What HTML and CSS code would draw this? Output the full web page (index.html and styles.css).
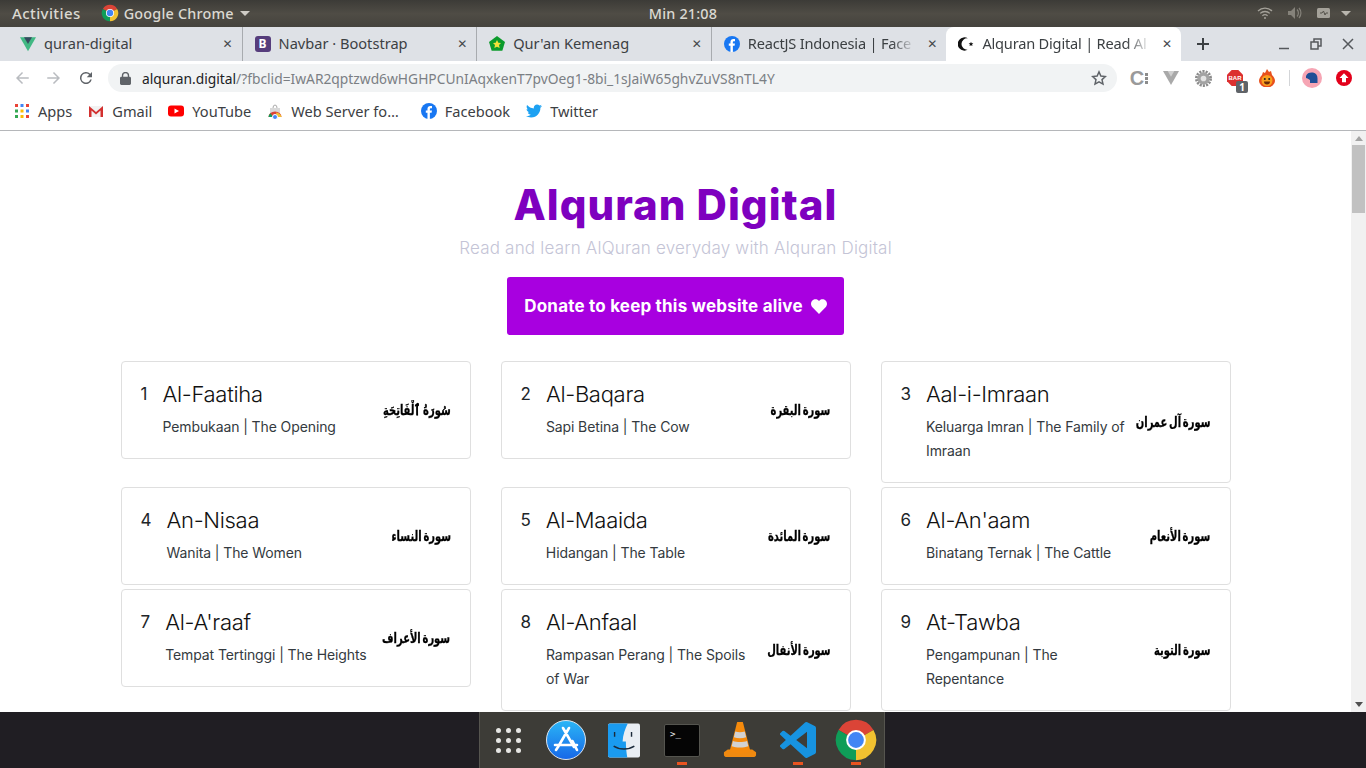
FILE: index.html
```html
<!DOCTYPE html>
<html>

	<head>
		<meta charset="UTF-8">
		<title>Alquran Digital | Read AlQuran</title>
		<link rel="stylesheet" href="styles.css">
	</head>

	<body>
		<svg class="defs" width="0" height="0">
			<symbol id="chrome" viewBox="0 0 24 24">
				<path d="M12 12L2.47 6.5A11 11 0 0 1 21.53 6.5Z" fill="#db4437"/>
				<path d="M12 12L21.53 6.5A11 11 0 0 1 12 23Z" fill="#f2c230"/>
				<path d="M12 12L12 23A11 11 0 0 1 2.47 6.5Z" fill="#0f9d58"/>
				<circle cx="12" cy="12" r="5.4" fill="#fff"/>
				<circle cx="12" cy="12" r="4.3" fill="#4285f4"/>
			</symbol>
			<symbol id="fb" viewBox="0 0 24 24">
				<circle cx="12" cy="12" r="12" fill="#1877f2"/>
				<path d="M16.5 7.8h-2c-.8 0-1.2.5-1.2 1.2v2.4h3.1l-.5 3.2h-2.6V24h-3.6v-9.4H7.2v-3.2h2.5V8.8c0-2.9 1.7-4.4 4.2-4.4 1.2 0 2.6.2 2.6.2z" fill="#fff"/>
			</symbol>
		</svg>

		<!-- gnome top bar -->
		<div class="topbar">
			<div class="top_left">
				<span class="activities">Activities</span>
				<svg class="top_chrome" width="18" height="18"><use href="#chrome"/></svg>
				<span class="app_name">Google Chrome</span>
				<i class="caret"></i>
			</div>
			<div class="clock">Min 21:08</div>
			<div class="tray">
				<svg width="16" height="14" viewBox="0 0 16 14" fill="none" stroke="#a5a29a" stroke-width="1.3"><path d="M1 5a10 10 0 0 1 14 0M3.2 7.4a7 7 0 0 1 9.6 0M5.4 9.7a4 4 0 0 1 5.2 0"/><circle cx="8" cy="12" r="1" fill="#a5a29a" stroke="none"/></svg>
				<svg width="14" height="14" viewBox="0 0 14 14" fill="#85827a"><path d="M0 5h3l4-4v12L3 9H0z"/><path d="M9 3.5a5 5 0 0 1 0 7M11 2a7.500 7.500 0 0 1 0 10" fill="none" stroke="#85827a" stroke-width="1.2"/></svg>
				<svg width="14" height="12" viewBox="0 0 14 12"><rect x="0" y="1" width="13" height="10" rx="1.5" fill="#a5a29a"/><path d="M3 6h2l1.500-2 1.500 4 1-2h2" fill="none" stroke="#55524b"/></svg>
				<i class="caret tray_caret"></i>
			</div>
		</div>

		<!-- tabs -->
		<div class="tabstrip">
			<div class="tab">
				<svg class="favicon" viewBox="0 0 24 24"><path d="M0 2h24L12 23z" fill="#41b883"/><path d="M6 2h12l-6 10z" fill="#35495e"/></svg>
				<span class="tab_title">quran-digital</span>
				<span class="tab_close">✕</span>
			</div>
			<div class="tab">
				<span class="favicon boot">B</span>
				<span class="tab_title">Navbar · Bootstrap</span>
				<span class="tab_close">✕</span>
			</div>
			<div class="tab">
				<svg class="favicon" viewBox="0 0 24 24"><path d="M12 0l12 9-4 13H4L0 9z" fill="#0c9b2c"/><path d="M12 6l2 4 4 .5-3 3 1 4.500-4-2-4 2 1-4.500-3-3 4-.5z" fill="#f3e23a"/></svg>
				<span class="tab_title">Qur'an Kemenag</span>
				<span class="tab_close">✕</span>
			</div>
			<div class="tab tab_last">
				<svg class="favicon"><use href="#fb"/></svg>
				<span class="tab_title fade">ReactJS Indonesia | Face</span>
				<span class="tab_close">✕</span>
			</div>
			<div class="tab tab_active">
				<svg class="favicon" viewBox="0 0 24 24"><path d="M15 3.600A10 10 0 1 0 15 20.400 8.500 8.500 0 1 1 15 3.600z" fill="#111"/><path d="M19.500 8.500l1 2.300 2.500.2-1.900 1.600.6 2.400-2.200-1.300-2.200 1.300.6-2.400-1.900-1.600 2.500-.2z" fill="#111"/></svg>
				<span class="tab_title fade">Alquran Digital | Read Al</span>
				<span class="tab_close">✕</span>
			</div>
			<span class="newtab">
				<svg width="14" height="14" viewBox="0 0 14 14"><path d="M7 1v12M1 7h12" stroke="#3c4043" stroke-width="2"/></svg>
			</span>
			<div class="win_btns">
				<svg width="12" height="12" viewBox="0 0 12 12"><path d="M1 10.500h10" stroke="#55585c" stroke-width="1.500"/></svg>
				<svg width="12" height="12" viewBox="0 0 12 12" fill="none" stroke="#55585c" stroke-width="1.500"><path d="M1 4h7v7H1zM4 4V1h7v7H8"/></svg>
				<svg width="12" height="12" viewBox="0 0 12 12"><path d="M1 1l10 10M11 1L1 11" stroke="#55585c" stroke-width="1.500"/></svg>
			</div>
		</div>

		<!-- address bar -->
		<div class="toolbar">
			<span class="tool"><svg width="18" height="18" viewBox="0 0 24 24" fill="#b9bcc0"><path d="M21 11H7.800l5.600-5.600L12 4l-8 8 8 8 1.400-1.400L7.800 13H21z"/></svg></span>
			<span class="tool"><svg width="18" height="18" viewBox="0 0 24 24" fill="#b9bcc0"><path d="M3 11h13.200l-5.600-5.600L12 4l8 8-8 8-1.400-1.400 5.600-5.600H3z"/></svg></span>
			<span class="tool"><svg width="18" height="18" viewBox="0 0 24 24" fill="#5f6368"><path d="M17.650 6.350A8 8 0 1 0 19.730 14h-2.080A6 6 0 1 1 12 6c1.660 0 3.140.69 4.220 1.780L13 11h7V4z"/></svg></span>
			<div class="omnibox">
				<svg class="lock" width="11" height="13" viewBox="0 0 12 14" fill="#5f6368"><path d="M2 5V3.800a4 4 0 0 1 8 0V5h.5c.8 0 1.500.7 1.500 1.500v6c0 .8-.7 1.500-1.500 1.500h-9C.7 14 0 13.300 0 12.500v-6C0 5.700.7 5 1.500 5zm1.500 0h5V3.800a2.500 2.500 0 0 0-5 0z"/></svg>
				<span class="url"><b>alquran.digital</b>/?fbclid=IwAR2qptzwd6wHGHPCUnIAqxkenT7pvOeg1-8bi_1sJaiW65ghvZuVS8nTL4Y</span>
				<svg class="star" width="16" height="16" viewBox="0 0 24 24" fill="none" stroke="#5f6368" stroke-width="2.200"><path d="M12 2.800l2.800 6.300 6.800.7-5.100 4.600 1.500 6.800-6-3.500-6 3.500 1.500-6.800L2.400 9.800l6.800-.7z"/></svg>
			</div>
			<span class="tool ext_c">C<i></i></span>
			<span class="tool"><svg width="16" height="14" viewBox="0 0 24 21"><path d="M0 0h24L12 21z" fill="#a9a9a9"/><path d="M7 0h10l-5 8.500z" fill="#d0d0d0"/></svg></span>
			<span class="tool"><svg width="17" height="17" viewBox="0 0 18 18"><circle cx="9" cy="9" r="7.500" fill="none" stroke="#8b8b8b" stroke-width="3" stroke-dasharray="2.200 1.200"/><circle cx="9" cy="9" r="6.500" fill="#a3a3a3"/><circle cx="9" cy="9" r="3" fill="#e4e4e4"/></svg></span>
			<span class="tool ext_badge">
				<svg width="16" height="16" viewBox="0 0 16 16"><path d="M4.700 0h6.600L16 4.700v6.600L11.300 16H4.700L0 11.300V4.700z" fill="#dc2f2f"/></svg>
				<span class="bar_txt">BAR</span>
				<span class="badge">1</span>
			</span>
			<span class="tool"><svg width="16" height="18" viewBox="0 0 16 18"><path d="M8 0l2 3 2-1 1 4c2 2 3 4 3 6a8 6.500 0 0 1-16 0c0-2 1-4 3-6l1-3 2 1z" fill="#e8501c"/><circle cx="8" cy="11.500" r="5.500" fill="#f9a01f"/><circle cx="5.800" cy="10" r="1" fill="#222"/><circle cx="10.200" cy="10" r="1" fill="#222"/><path d="M5 12.500a3 3 0 0 0 6 0z" fill="#6b2a08"/></svg></span>
			<i class="tool_div"></i>
			<span class="tool"><svg width="20" height="20" viewBox="0 0 20 20"><circle cx="10" cy="10" r="10" fill="#f6a5b4"/><path d="M4 8c1-3 4-4 7-3.500 3 .5 4.500 3 4.500 6V15H8v-3L5.500 10.500 4 10z" fill="#1f4e96"/></svg></span>
			<span class="tool"><svg width="16" height="16" viewBox="0 0 16 16"><circle cx="8" cy="8" r="8" fill="#e3001b"/><path d="M8 3.200L12.500 8H10v4.200H6V8H3.500z" fill="#fff"/></svg></span>
		</div>

		<!-- bookmarks -->
		<div class="bookmarks">
			<a class="bm">
				<svg class="bm_icon" viewBox="0 0 16 16"><g id="dots"><rect x="1" y="1" width="3" height="3" fill="#ea4335"/><rect x="6.500" y="1" width="3" height="3" fill="#4285f4"/><rect x="12" y="1" width="3" height="3" fill="#ea4335"/><rect x="1" y="6.500" width="3" height="3" fill="#34a853"/><rect x="6.500" y="6.500" width="3" height="3" fill="#fbbc05"/><rect x="12" y="6.500" width="3" height="3" fill="#4285f4"/><rect x="1" y="12" width="3" height="3" fill="#34a853"/><rect x="6.500" y="12" width="3" height="3" fill="#fbbc05"/><rect x="12" y="12" width="3" height="3" fill="#ea4335"/></g></svg>
				Apps
			</a>
			<a class="bm">
				<svg class="bm_icon" viewBox="0 0 16 16"><path d="M1 3h14v11H1z" fill="#f2f2f2"/><path d="M1 3l7 6 7-6v11h-2.500V7.500L8 11.500 3.500 7.500V14H1z" fill="#d3302f"/></svg>
				Gmail
			</a>
			<a class="bm">
				<svg class="bm_icon" viewBox="0 0 16 16"><rect y="2.500" width="16" height="11" rx="3" fill="#f00"/><path d="M6.500 5.500L11 8l-4.500 2.500z" fill="#fff"/></svg>
				YouTube
			</a>
			<a class="bm bm_web">
				<svg class="bm_icon" viewBox="0 0 16 16"><path d="M3 5h10v5H3z" fill="#d9d9d9"/><path d="M6 5a2 3 0 0 1 4 0" fill="none" stroke="#aaa"/><path d="M1.500 14a6.500 5.500 0 0 1 13 0z" fill="#db4437"/><path d="M9 9.500a6.500 5.500 0 0 1 5.500 4.500H10z" fill="#f2c230"/><path d="M1.500 14a6.500 5.500 0 0 1 2-3.700L6 14z" fill="#0f9d58"/><circle cx="8" cy="14" r="2.500" fill="#4285f4" stroke="#fff"/></svg>
				Web Server fo…
			</a>
			<a class="bm">
				<svg class="bm_icon"><use href="#fb"/></svg>
				Facebook
			</a>
			<a class="bm">
				<svg class="bm_icon" viewBox="0 0 24 24"><path d="M23.954 4.569c-.885.389-1.830.654-2.825.775 1.014-.611 1.794-1.574 2.163-2.723-.951.555-2.005.959-3.127 1.184-.896-.959-2.173-1.559-3.591-1.559-2.717 0-4.920 2.203-4.920 4.917 0 .39.045.765.127 1.124C7.691 8.094 4.066 6.130 1.640 3.161c-.427.722-.666 1.561-.666 2.475 0 1.710.87 3.213 2.188 4.096-.807-.026-1.566-.248-2.228-.616v.061c0 2.385 1.693 4.374 3.946 4.827-.413.111-.849.171-1.296.171-.314 0-.615-.03-.916-.086.631 1.953 2.445 3.377 4.604 3.417-1.680 1.319-3.809 2.105-6.102 2.105-.39 0-.779-.023-1.170-.067 2.189 1.394 4.768 2.209 7.557 2.209 9.054 0 13.999-7.496 13.999-13.986 0-.209 0-.42-.015-.63.961-.689 1.800-1.560 2.460-2.548l-.047-.02z" fill="#1da1f2"/></svg>
				Twitter
			</a>
		</div>

		<!-- page -->
		<div class="viewport">
			<div class="page">
				<h1 class="title">Alquran Digital</h1>
				<p class="subtitle">Read and learn AlQuran everyday with Alquran Digital</p>
				<a class="donate">Donate to keep this website alive
					<svg width="16" height="15" viewBox="0 0 16 15"><path d="M8 15L1.400 8.300C-.5 6.300-.4 3.200 1.400 1.500 3.100-.2 6-.1 7.500 1.500l.5.600.5-.6C10-.1 12.900-.2 14.600 1.500c1.800 1.700 1.900 4.800 0 6.800z" fill="#fff"/></svg>
				</a>
				<div class="cards">
					<div class="card">
						<div class="card_left"><span class="num">1</span><div><div class="name">Al-Faatiha</div><div class="mean">Pembukaan | The Opening</div></div></div>
						<div class="arabic" lang="ar" dir="rtl">سُورَةُ ٱلْفَاتِحَةِ</div>
					</div>
					<div class="card">
						<div class="card_left"><span class="num">2</span><div><div class="name">Al-Baqara</div><div class="mean">Sapi Betina | The Cow</div></div></div>
						<div class="arabic" lang="ar" dir="rtl">سورة البقرة</div>
					</div>
					<div class="card">
						<div class="card_left"><span class="num">3</span><div><div class="name">Aal-i-Imraan</div><div class="mean">Keluarga Imran | The Family of Imraan</div></div></div>
						<div class="arabic" lang="ar" dir="rtl">سورة آل عمران</div>
					</div>
					<div class="card">
						<div class="card_left"><span class="num">4</span><div><div class="name">An-Nisaa</div><div class="mean">Wanita | The Women</div></div></div>
						<div class="arabic" lang="ar" dir="rtl">سورة النساء</div>
					</div>
					<div class="card">
						<div class="card_left"><span class="num">5</span><div><div class="name">Al-Maaida</div><div class="mean">Hidangan | The Table</div></div></div>
						<div class="arabic" lang="ar" dir="rtl">سورة المائدة</div>
					</div>
					<div class="card">
						<div class="card_left"><span class="num">6</span><div><div class="name">Al-An'aam</div><div class="mean">Binatang Ternak | The Cattle</div></div></div>
						<div class="arabic" lang="ar" dir="rtl">سورة الأنعام</div>
					</div>
					<div class="card">
						<div class="card_left"><span class="num">7</span><div><div class="name">Al-A'raaf</div><div class="mean">Tempat Tertinggi | The Heights</div></div></div>
						<div class="arabic" lang="ar" dir="rtl">سورة الأعراف</div>
					</div>
					<div class="card">
						<div class="card_left"><span class="num">8</span><div><div class="name">Al-Anfaal</div><div class="mean">Rampasan Perang | The Spoils of War</div></div></div>
						<div class="arabic" lang="ar" dir="rtl">سورة الأنفال</div>
					</div>
					<div class="card">
						<div class="card_left"><span class="num">9</span><div><div class="name">At-Tawba</div><div class="mean">Pengampunan | The Repentance</div></div></div>
						<div class="arabic" lang="ar" dir="rtl">سورة التوبة</div>
					</div>
				</div>
			</div>
			<div class="scrollbar">
				<i class="arrow_up"></i>
				<div class="thumb"></div>
				<i class="arrow_down"></i>
			</div>
		</div>

		<!-- dock -->
		<div class="dock">
			<div class="dock_inner">
				<span class="dock_item grid_dots"><i></i><i></i><i></i><i></i><i></i><i></i><i></i><i></i><i></i></span>
				<span class="dock_item">
					<svg width="40" height="40" viewBox="0 0 40 40"><defs><linearGradient id="as" x1="0" y1="0" x2="0" y2="1"><stop offset="0" stop-color="#2bb6f6"/><stop offset="1" stop-color="#1667e8"/></linearGradient></defs><circle cx="20" cy="20" r="19.500" fill="url(#as)" stroke="#dfe6ee" stroke-width="1"/><path d="M23 8L12 27M17 8l11 19M9 25h22M26.500 21L31 30M12 27l-2 3" fill="none" stroke="#fff" stroke-width="2.600" stroke-linecap="round"/></svg>
				</span>
				<span class="dock_item">
					<svg width="32" height="35" viewBox="0 0 34 36"><rect width="34" height="36" rx="2" fill="#e9eef3"/><path d="M2 0h19c-3 6-5 12-5.500 19H19c0 6 .5 11 1.500 17H2a2 2 0 0 1-2-2V2a2 2 0 0 1 2-2z" fill="#1a9bf0"/><path d="M7 9v5M25 9v5" stroke="#1b2a3a" stroke-width="1.500"/><path d="M6 24c6 4 16 4 22 0" fill="none" stroke="#1b2a3a" stroke-width="1.500"/></svg>
				</span>
				<span class="dock_item term"><span>&gt;_</span></span>
				<span class="dock_item">
					<svg width="34" height="36" viewBox="0 0 36 38"><path d="M1 32l4-3h26l4 3v3c0 1-1 2-2 2H3c-1 0-2-1-2-2z" fill="#f08a10"/><path d="M15 0h6l8 31c-5 3-17 3-22 0z" fill="#f58a0c"/><path d="M13 10c3 1 7 1 10 0l1.500 6c-4 1.500-9 1.500-13 0zM10.500 20c4 1.500 11 1.500 15 0l1.300 5.500c-5 2-12.600 2-17.600 0z" fill="#d2d2d2"/></svg>
				</span>
				<span class="dock_item">
					<svg width="36" height="36" viewBox="0 0 24 24"><path d="M23.150 2.587L18.210.21a1.494 1.494 0 0 0-1.705.29l-9.460 8.630-4.120-3.128a.999.999 0 0 0-1.276.057L.327 7.261A1 1 0 0 0 .326 8.740L3.899 12 .326 15.260a1 1 0 0 0 .001 1.479L1.650 17.940a.999.999 0 0 0 1.276.057l4.120-3.128 9.460 8.630a1.492 1.492 0 0 0 1.704.29l4.942-2.377A1.500 1.500 0 0 0 24 20.060V3.939a1.500 1.500 0 0 0-.85-1.352zm-5.146 14.861L10.826 12l7.178-5.448v10.896z" fill="#1793e0"/></svg>
				</span>
				<span class="dock_item">
					<svg width="44" height="44"><use href="#chrome"/></svg>
				</span>
			</div>
			<i class="run run1"></i><i class="run run2"></i><i class="run run3"></i>
		</div>
	</body>

</html>
```

FILE: styles.css
```css
* {
	margin: 0px;
	padding: 0px;
	box-sizing: border-box;
}
html, body {
	width: 1366px;
	height: 768px;
	overflow: hidden;
}
body {
	display: flex;
	flex-direction: column;
	font-family: "Noto Sans", sans-serif;
	background: #fff;
}
i {
	display: block;
}
svg {
	display: block;
	flex: none;
}
.defs {
	position: absolute;
}

/* top bar */
.topbar {
	height: 27px;
	display: grid;
	grid-template-columns: 1fr auto 1fr;
	align-items: center;
	padding: 0 12px 1px;
	background: linear-gradient(#3c3b37, #4f4c45 50%, #45433d);
	color: #dbd9d2;
	font-size: 14.4px;
	font-weight: 500;
	letter-spacing: 0.2px;
}
.top_left {
	display: flex;
	align-items: center;
}
.activities {
	margin-right: 20px;
	font-size: 15px;
	letter-spacing: 0.4px;
}
.top_chrome {
	margin-right: 5px;
}
.caret {
	width: 0;
	height: 0;
	margin-left: 6px;
	border-left: 5px solid transparent;
	border-right: 5px solid transparent;
	border-top: 5px solid #cfccc5;
}
.tray {
	display: flex;
	justify-content: flex-end;
	align-items: center;
	gap: 15px;
	padding-right: 3px;
}
.tray_caret {
	margin-left: -5px;
	border-top-color: #b9b6ae;
}

/* tabs */
.tabstrip {
	height: 34px;
	display: flex;
	align-items: center;
	padding-left: 8px;
	background: #dee1e6;
	color: #3c4043;
	font-size: 14.6px;
}
.tab {
	width: 234.6px;
	height: 34px;
	display: flex;
	align-items: center;
	padding: 0 7px 0 12px;
	border-right: 1px solid #a8abaf;
	background-clip: padding-box;
}
.tab_last {
	border-right: none;
}
.tab_active {
	background: #fff;
	border-right: none;
	border-radius: 8px 8px 0 0;
}
.favicon {
	width: 16px;
	height: 16px;
	margin-right: 8px;
	flex: none;
}
.boot {
	display: block;
	background: #563d7c;
	border-radius: 3px;
	color: #fff;
	font-weight: 700;
	font-size: 12px;
	line-height: 16px;
	text-align: center;
}
.tab_title {
	flex: 1;
	min-width: 0;
	padding-bottom: 2px;
	white-space: nowrap;
	overflow: hidden;
}
.fade {
	letter-spacing: -0.2px;
	-webkit-mask-image: linear-gradient(to right, #000 85%, transparent 99%);
	mask-image: linear-gradient(to right, #000 85%, transparent 99%);
}
.tab_close {
	width: 14px;
	margin-left: 8px;
	font-size: 12px;
	text-align: center;
	color: #45484c;
	font-family: "DejaVu Sans", sans-serif;
}
.newtab {
	margin-left: 15px;
}
.win_btns {
	display: flex;
	gap: 20px;
	margin-left: auto;
	padding-right: 12px;
}

/* address bar */
.toolbar {
	height: 34px;
	display: flex;
	align-items: center;
	padding: 0 6px;
	background: #fff;
}
.tool {
	width: 32px;
	height: 28px;
	display: flex;
	align-items: center;
	justify-content: center;
	position: relative;
}
.omnibox {
	flex: 1;
	height: 28px;
	margin: 0 6px;
	display: flex;
	align-items: center;
	padding: 0 10px 0 12px;
	background: #f1f3f4;
	border-radius: 14px;
	font-size: 13.8px;
	color: #7b7f84;
}
.lock {
	margin-right: 11px;
}
.url {
	flex: 1;
	white-space: nowrap;
}
.url b {
	font-weight: 400;
	color: #202124;
}
.ext_c {
	font-family: "Liberation Sans", sans-serif;
	font-weight: 700;
	font-size: 20px;
	color: #9a9a9a;
}
.ext_c i {
	width: 3px;
	height: 11px;
	margin-left: 1px;
	background: repeating-linear-gradient(#8c8c8c 0 3px, transparent 3px 4px);
}
.bar_txt {
	position: absolute;
	left: 8px;
	top: 9px;
	width: 16px;
	color: #fff;
	font-family: "Liberation Sans", sans-serif;
	font-size: 6px;
	font-weight: 700;
	line-height: 10px;
	text-align: center;
}
.badge {
	position: absolute;
	left: 17px;
	top: 17px;
	width: 12px;
	height: 12px;
	background: #5f6368;
	border-radius: 2px;
	color: #fff;
	font-size: 10px;
	font-weight: 700;
	line-height: 12px;
	text-align: center;
}
.tool_div {
	width: 1px;
	height: 16px;
	margin: 0 6px;
	background: #d3d5d8;
}

/* bookmarks */
.bookmarks {
	height: 36px;
	display: flex;
	align-items: center;
	padding: 0 0 3px 6px;
	background: #fff;
	border-bottom: 1px solid #b5b7ba;
	font-size: 14.6px;
	color: #3c4043;
}
.bm {
	display: flex;
	align-items: center;
	gap: 8px;
	padding: 0 8px;
}
.bm_icon {
	width: 16px;
	height: 16px;
}
.bm_web {
	margin-right: 6px;
}

/* page */
.viewport {
	height: 581px;
	display: flex;
	overflow: hidden;
	font-family: "Inter", sans-serif;
}
.page {
	flex: 1;
	display: flex;
	flex-direction: column;
	align-items: center;
	padding-top: 50px;
}
.title {
	font-size: 42px;
	font-weight: 800;
	line-height: 48px;
	letter-spacing: 1px;
	color: #7e00bf;
}
.subtitle {
	margin-top: 7px;
	font-size: 17px;
	font-weight: 300;
	line-height: 24px;
	letter-spacing: 0.2px;
	color: #c4c4d6;
}
.donate {
	height: 58px;
	margin: 17px 0 26px;
	display: flex;
	align-items: center;
	gap: 8px;
	padding: 0 17px;
	background: #a800e0;
	border-radius: 3px;
	color: #fff;
	font-size: 17px;
	font-weight: 700;
	letter-spacing: 0.2px;
}
.cards {
	display: grid;
	grid-template-columns: repeat(3, 350px);
	gap: 4px 30px;
	align-items: start;
}
.card {
	display: flex;
	align-items: center;
	justify-content: space-between;
	padding: 20px 19px;
	border: 1px solid #dfdfdf;
	border-radius: 4px;
	color: #212529;
}
.card_left {
	display: flex;
	flex: none;
}
.num {
	margin-right: 15px;
	font-size: 17px;
	line-height: 24px;
}
.name {
	font-size: 22px;
	line-height: 24px;
	font-weight: 350;
	letter-spacing: -0.3px;
	color: #111;
}
.mean {
	max-width: 206px;
	margin: 9px 0 -1px;
	font-size: 14px;
	line-height: 24px;
	letter-spacing: -0.1px;
	color: #343a40;
}
.arabic {
	min-width: 0;
	font-family: "DejaVu Sans", sans-serif;
	font-stretch: condensed;
	font-size: 13px;
	font-weight: 700;
	word-spacing: -2px;
	color: #000;
	white-space: nowrap;
	-webkit-text-stroke: 0.25px #000;
	transform: scale(0.85, 1.1);
	transform-origin: right center;
}

/* scrollbar */
.scrollbar {
	width: 15px;
	display: flex;
	flex-direction: column;
	align-items: center;
	background: #f1f1f1;
}
.thumb {
	width: 13px;
	height: 68px;
	margin-top: 4px;
	background: #c1c1c1;
}
.arrow_up, .arrow_down {
	width: 0;
	height: 0;
	border-left: 4px solid transparent;
	border-right: 4px solid transparent;
}
.arrow_up {
	margin-top: 5px;
	border-bottom: 5px solid #a3a3a3;
}
.arrow_down {
	margin-top: auto;
	margin-bottom: 5px;
	border-top: 5px solid #505050;
}

/* dock */
.dock {
	height: 56px;
	display: flex;
	justify-content: center;
	position: relative;
	background: #201e23;
}
.dock_inner {
	width: 406px;
	margin-right: 2px;
	display: flex;
	align-items: center;
	background: #3d3c37;
	box-shadow: inset 1px 0 #56554f, inset -1px 0 #56554f;
}
.dock_item {
	width: 58px;
	flex: none;
	display: flex;
	justify-content: center;
}
.grid_dots {
	display: grid;
	grid-template-columns: repeat(3, 5px);
	gap: 5px;
	justify-content: center;
}
.grid_dots i {
	width: 5px;
	height: 5px;
	border-radius: 50%;
	background: #e6e6e3;
}
.term {
	height: 33px;
	width: 36px;
	margin: 0 11px;
	display: block;
	padding: 4px 5px;
	background: #050505;
	border: 1px solid #55554f;
	border-radius: 2px;
	color: #eee;
	font-family: "DejaVu Sans Mono", monospace;
	font-size: 9px;
	line-height: 10px;
}
.run {
	position: absolute;
	bottom: 3px;
	width: 10px;
	height: 3px;
	background: #e95420;
}
.run1 { left: 677px; }
.run2 { left: 793px; }
.run3 { left: 851px; }
```
